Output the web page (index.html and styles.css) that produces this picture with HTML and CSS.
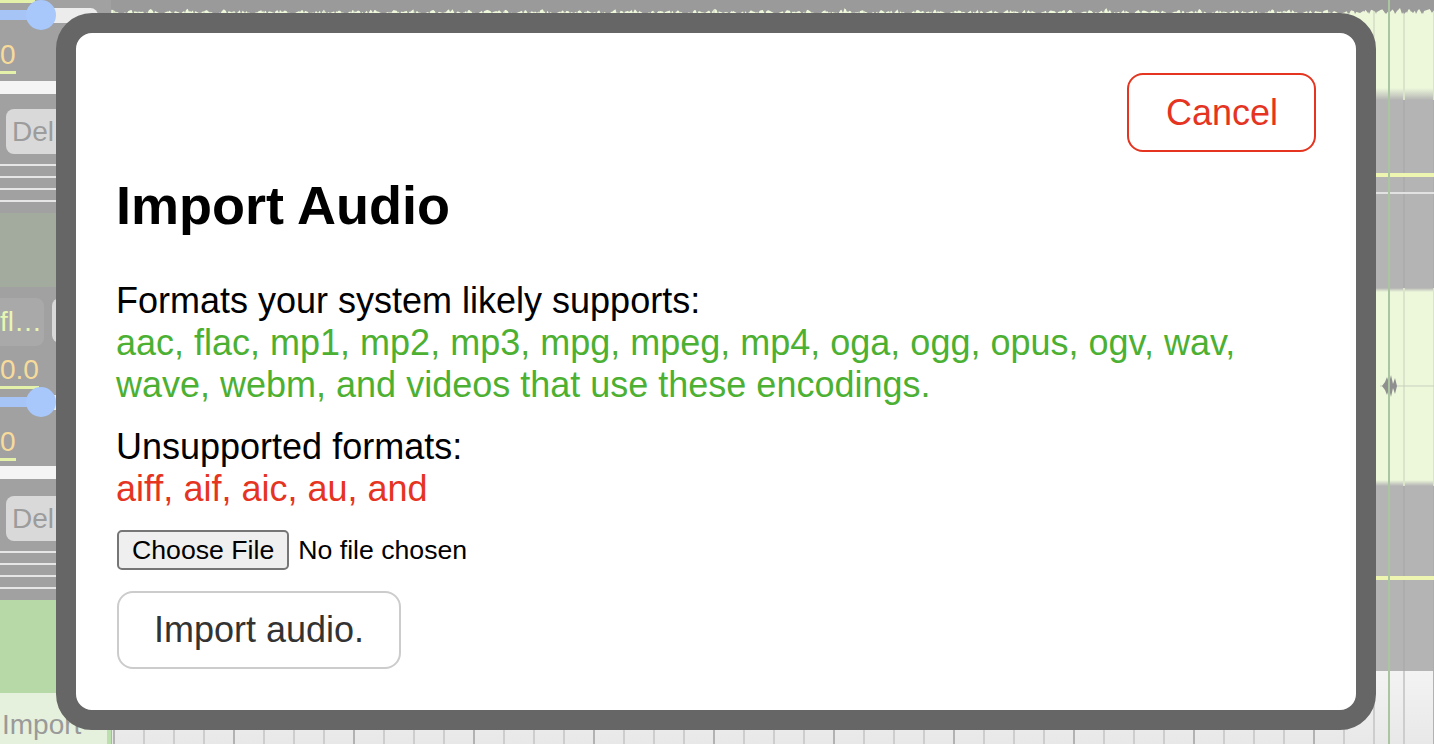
FILE: index.html
```html
<!DOCTYPE html>
<html lang="en">
<head>
<meta charset="utf-8">
<title>Import Audio</title>
<link rel="stylesheet" href="styles.css">
</head>
<body>
<div class="app">
  <aside class="side">
    <div class="panel p1">
      <div class="slider s1"><span class="topline"></span><span class="rest"></span><span class="fill"></span><span class="knob"></span></div>
      <div class="num n1">0</div>
      <div class="bar"></div>
      <div class="del">Del</div>
      <div class="lines"><i></i><i></i><i></i><i></i></div>
    </div>
    <div class="gap"></div>
    <div class="panel p2">
      <div class="btns"><div class="fl">fl…</div><div class="b2"></div></div>
      <div class="num n2">0.0</div>
      <div class="slider s2"><span class="rest"></span><span class="fill"></span><span class="knob"></span></div>
      <div class="num n3">0</div>
      <div class="bar"></div>
      <div class="del">Del</div>
      <div class="lines"><i></i><i></i><i></i><i></i></div>
    </div>
    <div class="drop"></div>
    <div class="import-lbl">Import</div>
  </aside>
  <main class="tracks">
    <div class="row ra">
      <svg class="wave" width="1323" height="24" viewBox="0 0 1323 24" preserveAspectRatio="none">
        <defs>
          <pattern id="w1" width="47" height="24" patternUnits="userSpaceOnUse">
            <polygon fill="#9a9a9a" points="0,0 47,0 47,10 44,11 43,14 41,8 38,10 36,14 34,8 31,12 29,7 27,13 25,9 22,14 20,8 17,11 15,14 13,9 10,12 8,7 5,13 3,9 0,10"/>
          </pattern>
          <pattern id="w2" width="73" height="24" patternUnits="userSpaceOnUse">
            <polygon fill="#9a9a9a" points="0,0 73,0 73,8 70,14 66,7 61,13 57,9 52,14 48,6 43,12 39,8 34,14 30,9 25,12 20,7 16,13 12,8 7,12 3,7 0,8"/>
          </pattern>
          <pattern id="w3" width="131" height="24" patternUnits="userSpaceOnUse">
            <polygon fill="#9a9a9a" points="0,0 131,0 131,9 120,12 112,9 104,14 96,10 88,13 78,8 70,13 60,10 50,14 40,9 30,12 20,10 10,14 0,9"/>
          </pattern>
        </defs>
        <rect x="0" y="0" width="1323" height="24" fill="url(#w1)"/>
        <rect x="0" y="0" width="1323" height="24" fill="url(#w2)"/>
        <rect x="0" y="0" width="1265" height="24" fill="url(#w3)"/>
      </svg>
    </div>
    <div class="row rb"><div class="hl yellow l1"></div><div class="hl white l2"></div></div>
    <div class="row rc">
      <svg class="blip" width="60" height="24" viewBox="0 0 60 24">
        <line x1="0" y1="12" x2="60" y2="12" stroke="#c9cfc0" stroke-width="1"/>
        <polygon fill="#8f8f8f" points="2,12 5,8 7,3 9,9 11,1 13,10 15,4 17,12 15,20 13,14 11,23 9,15 7,21 5,16"/>
      </svg>
    </div>
    <div class="row rd"><div class="hl yellow l3"></div></div>
    <div class="row re"></div>
    <div class="playhead"></div>
  </main>
</div>

<div class="modal">
  <div class="modal-top"><button class="btn cancel" type="button">Cancel</button></div>
  <h2 class="title">Import Audio</h2>
  <p class="block">Formats your system likely supports:<br><span class="ok">aac, flac, mp1, mp2, mp3, mpg, mpeg, mp4, oga, ogg, opus, ogv, wav, wave, webm, and videos that use these encodings.</span></p>
  <p class="block">Unsupported formats:<br><span class="bad">aiff, aif, aic, au, and</span></p>
  <input class="file" type="file">
  <button class="btn import" type="button">Import audio.</button>
</div>
</body>
</html>
```

FILE: styles.css
```css
* { box-sizing: border-box; }

html, body {
  margin: 0;
  padding: 0;
  width: 1434px;
  height: 744px;
  overflow: hidden;
  font-family: "Liberation Sans", Arial, sans-serif;
  background: #a0a0a0;
}

.app {
  display: flex;
  width: 1434px;
  height: 744px;
}

/* ---------- left sidebar ---------- */
.side {
  width: 111px;
  flex: none;
  display: flex;
  flex-direction: column;
  background: #a0a0a0;
}

.panel {
  display: flex;
  flex-direction: column;
  align-items: flex-start;
  background: #a1a1a1;
}
.p1 { height: 213px; }
.p2 { height: 313px; }

.gap { height: 74px; background: #a2ab9e; }
.drop { height: 93px; background: #b7d8a7; }

.import-lbl {
  flex: 1;
  background: #e5f1dd;
  border-right: 4px solid #bcdfae;
  color: #9a9a9a;
  font-size: 28px;
  line-height: 32px;
  padding: 16px 0 0 2px;
}

.slider {
  position: relative;
  width: 100px;
  height: 30px;
  flex: none;
}
.slider .topline {
  position: absolute;
  left: 0; top: 0;
  width: 35px; height: 3px;
  background: #e3f1a9;
}
.slider .rest {
  position: absolute;
  left: 30px; top: 8px;
  width: 68px; height: 15px;
  background: #ececec;
  border-radius: 0 8px 8px 0;
}
.slider .fill {
  position: absolute;
  left: 0; top: 10px;
  width: 40px; height: 10px;
  background: #a6c4f6;
}
.slider .knob {
  position: absolute;
  left: 26px; top: 0;
  width: 30px; height: 30px;
  border-radius: 50%;
  background: #a8c7fb;
}
.s2 { margin-top: -2px; }

.num {
  font-size: 28px;
  line-height: 32px;
  color: #f7db9b;
  border-bottom: 3px solid #e3f1a9;
}
.n1 { margin-top: 9px; }
.n2 { margin-top: 8px; }
.n3 { margin-top: 9px; }

.bar {
  width: 100px;
  height: 13px;
  background: #f4f4f4;
  border-radius: 0 6px 6px 0;
}
.p1 .bar { margin-top: 7px; }
.p2 .bar { margin-top: 5px; }

.del {
  width: 96px;
  height: 45px;
  margin-left: 6px;
  padding-left: 6px;
  background: #d9d9d9;
  border-radius: 8px;
  color: #9c9c9c;
  font-size: 28px;
  line-height: 45px;
}
.p1 .del { margin-top: 15px; }
.p2 .del { margin-top: 17px; }

.lines {
  display: flex;
  flex-direction: column;
  gap: 10px;
  margin-top: 10px;
  width: 100%;
}
.lines i {
  display: block;
  height: 2px;
  background: #e6e6e6;
}

.btns {
  display: flex;
  gap: 8px;
  margin-top: 11px;
  margin-left: -10px;
}
.fl {
  width: 54px;
  height: 48px;
  padding-left: 10px;
  background: #a9a9a9;
  border-radius: 8px;
  color: #e7f6b2;
  font-size: 28px;
  line-height: 48px;
  white-space: nowrap;
  overflow: hidden;
}
.b2 {
  width: 60px;
  height: 45px;
  background: #d9d9d9;
  border-radius: 8px;
}

/* ---------- tracks ---------- */
.tracks {
  position: relative;
  flex: 1;
  display: flex;
  flex-direction: column;
  overflow: hidden;
}

.row {
  position: relative;
  flex: none;
  background-position: 2px 0, 2px 0, 0 0;
}
.ra {
  height: 100px;
  background-image:
    repeating-linear-gradient(to right, #d9e4ca 0 2px, transparent 2px 30px),
    linear-gradient(to bottom, transparent 0 88px, #b4b4b4 100px),
    linear-gradient(#edf8da, #edf8da);
}
.ra .wave { display: block; }

.rb, .rd {
  background-image:
    repeating-linear-gradient(to right, #adadad 0 2px, transparent 2px 30px),
    linear-gradient(#b4b4b4, #b4b4b4);
  background-position: 2px 0, 0 0;
}
.rb { height: 188px; }
.rd { height: 185px; }

.rc {
  height: 198px;
  background-image:
    repeating-linear-gradient(to right, #d9e4ca 0 2px, transparent 2px 30px),
    linear-gradient(to bottom, #b4b4b4 0, transparent 4px, transparent 192px, #b4b4b4 198px),
    linear-gradient(#edf8da, #edf8da);
}
.blip {
  position: absolute;
  left: 1269px;
  top: 86px;
}

.re {
  flex: 1;
  background-image:
    repeating-linear-gradient(to right, #b2b2b2 0 2px, transparent 2px 120px),
    repeating-linear-gradient(to right, #cdcdcd 0 2px, transparent 2px 30px),
    linear-gradient(#f3f3f3, #e8e8e8);
  background-position: 2px 0, 2px 0, 0 0;
}

.hl { position: absolute; left: 0; right: 0; }
.yellow { height: 4px; background: #eef5b1; }
.white { height: 2px; background: #e2e2e2; }
.l1 { top: 73px; }
.l2 { top: 92px; }
.l3 { top: 90px; }

.playhead {
  position: absolute;
  left: 1277px;
  top: 0;
  bottom: 0;
  width: 2px;
  background: #a9c6a0;
}

/* ---------- modal ---------- */
.modal {
  position: absolute;
  left: 56px;
  top: 13px;
  width: 1320px;
  height: 717px;
  border: 20px solid #666666;
  border-radius: 36px;
  background: #ffffff;
  padding: 40px;
  display: flex;
  flex-direction: column;
  align-items: flex-start;
}

.modal-top {
  align-self: stretch;
  display: flex;
  justify-content: flex-end;
}

.btn {
  font-family: "Liberation Sans", Arial, sans-serif;
  font-size: 36px;
  background: #ffffff;
  border-radius: 16px;
  cursor: pointer;
  margin: 0;
}

.cancel {
  color: #e5341f;
  border: 2px solid #e5341f;
  line-height: 41px;
  padding: 17px 36px 17px 37px;
}

.title {
  margin: 22px 0 0;
  font-size: 54px;
  line-height: 62px;
  font-weight: bold;
  color: #000;
}

.block {
  margin: 20px 0 0;
  font-size: 36px;
  line-height: 42px;
  color: #000;
}
.title + .block { margin-top: 44px; }

.ok { color: #4cb032; }
.bad { color: #e5341f; }

.file {
  margin-top: 20px;
  font-family: "Liberation Sans", Arial, sans-serif;
  font-size: 26.67px;
  color: #000;
  height: 40px;
}
.file::file-selector-button {
  font-family: "Liberation Sans", Arial, sans-serif;
  font-size: 26.67px;
  height: 40px;
  padding: 0 13px;
  margin: 0 9px 0 1px;
  border: 2px solid #767676;
  border-radius: 5px;
  background: #efefef;
  color: #000;
}

.import {
  margin-top: 21px;
  margin-left: 1px;
  color: #333333;
  border: 2px solid #cccccc;
  line-height: 42px;
  padding: 16px 35px;
}
```
